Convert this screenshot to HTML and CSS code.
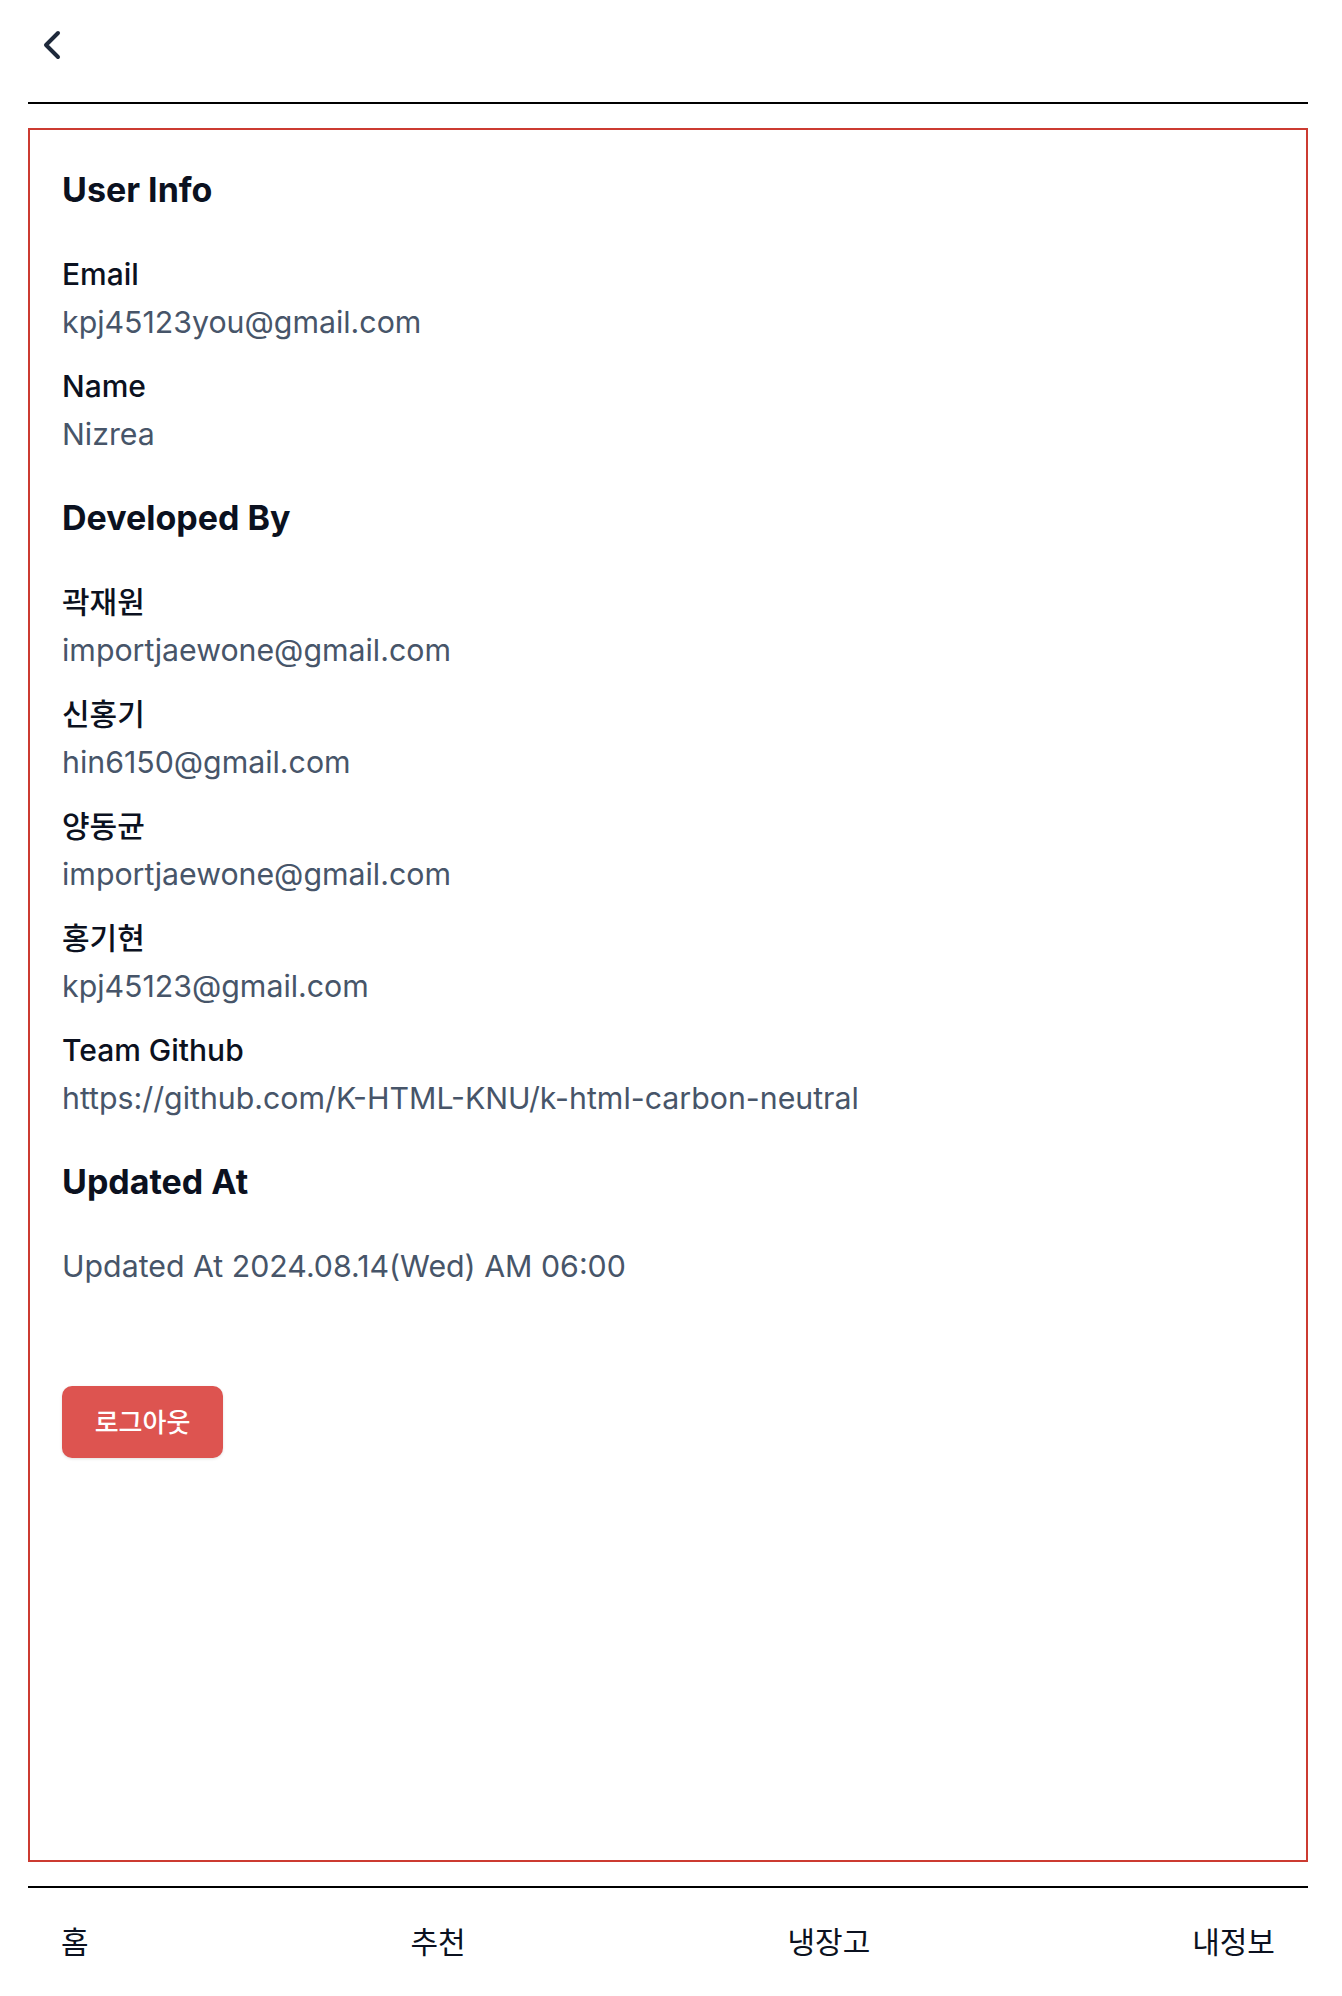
FILE: index.html
```html
<!DOCTYPE html>
<html lang="ko">
<head>
<meta charset="utf-8">
<title>내정보</title>
<link rel="stylesheet" href="styles.css">
</head>
<body>
<div class="page">
  <header class="topbar">
    <button class="back" aria-label="뒤로">
      <svg width="48" height="48" viewBox="0 0 24 24" fill="none" stroke="currentColor" stroke-width="2" stroke-linecap="round" stroke-linejoin="round"><path d="M15 18l-6-6 6-6"/></svg>
    </button>
  </header>

  <main class="panel">
    <section class="section">
      <h2 class="title">User Info</h2>
      <div class="fields">
        <div class="field"><div class="label">Email</div><div class="value">kpj45123you@gmail.com</div></div>
        <div class="field"><div class="label">Name</div><div class="value">Nizrea</div></div>
      </div>
    </section>

    <section class="section">
      <h2 class="title">Developed By</h2>
      <div class="fields">
        <div class="field"><div class="label">곽재원</div><div class="value">importjaewone@gmail.com</div></div>
        <div class="field"><div class="label">신홍기</div><div class="value">hin6150@gmail.com</div></div>
        <div class="field"><div class="label">양동균</div><div class="value">importjaewone@gmail.com</div></div>
        <div class="field"><div class="label">홍기현</div><div class="value">kpj45123@gmail.com</div></div>
        <div class="field"><div class="label">Team Github</div><div class="value">https://github.com/K-HTML-KNU/k-html-carbon-neutral</div></div>
      </div>
    </section>

    <section class="section">
      <h2 class="title">Updated At</h2>
      <div class="fields">
        <div class="value">Updated At 2024.08.14(Wed) AM 06:00</div>
      </div>
    </section>

    <button class="logout">로그아웃</button>
  </main>

  <nav class="tabbar">
    <a class="tab">홈</a>
    <a class="tab">추천</a>
    <a class="tab">냉장고</a>
    <a class="tab">내정보</a>
  </nav>
</div>
</body>
</html>
```

FILE: styles.css
```css
* { box-sizing: border-box; }
html, body { margin: 0; padding: 0; background: #ffffff; }
body {
  font-family: "Inter", "Noto Sans CJK KR", sans-serif;
  color: #0f172a;
}
.page {
  width: 1280px;
  margin-left: 28px;
}
.topbar {
  padding: 21px 0 33px;
  border-bottom: 2px solid #000;
}
.back {
  display: block;
  width: 48px;
  height: 48px;
  padding: 0;
  border: 0;
  background: none;
  color: #1e293b;
}
.back svg { display: block; }
.panel {
  margin-top: 24px;
  height: 1734px;
  border: 2px solid #cc3b31;
  padding: 40px 32px;
}
.section { margin-bottom: 44px; }
.title {
  margin: 0 0 44px;
  font-size: 34px;
  line-height: 40px;
  font-weight: 700;
  color: #0b1120;
}
.fields { display: flex; flex-direction: column; gap: 24px; }
.field { display: flex; flex-direction: column; gap: 8px; }
.label {
  font-size: 30px;
  line-height: 40px;
  font-weight: 500;
  color: #0b1120;
}
.value {
  font-size: 30.3px;
  line-height: 40px;
  font-weight: 400;
  color: #475569;
}
.logout {
  margin-top: 56px;
  width: 161px;
  height: 72px;
  padding: 0 0 3px;
  border: 0;
  border-radius: 10px;
  background: #dd5450;
  color: #fff;
  font-family: "Noto Sans CJK KR", sans-serif;
  font-size: 26px;
  font-weight: 500;
  box-shadow: 0 1px 3px rgba(0,0,0,0.12);
}
.tabbar {
  margin-top: 24px;
  border-top: 2px solid #000;
  padding: 32px 33px 40px;
  display: flex;
  justify-content: space-between;
}
.tab {
  font-family: "Noto Sans CJK KR", sans-serif;
  font-size: 30px;
  line-height: 40px;
  color: #0b1120;
}
```
